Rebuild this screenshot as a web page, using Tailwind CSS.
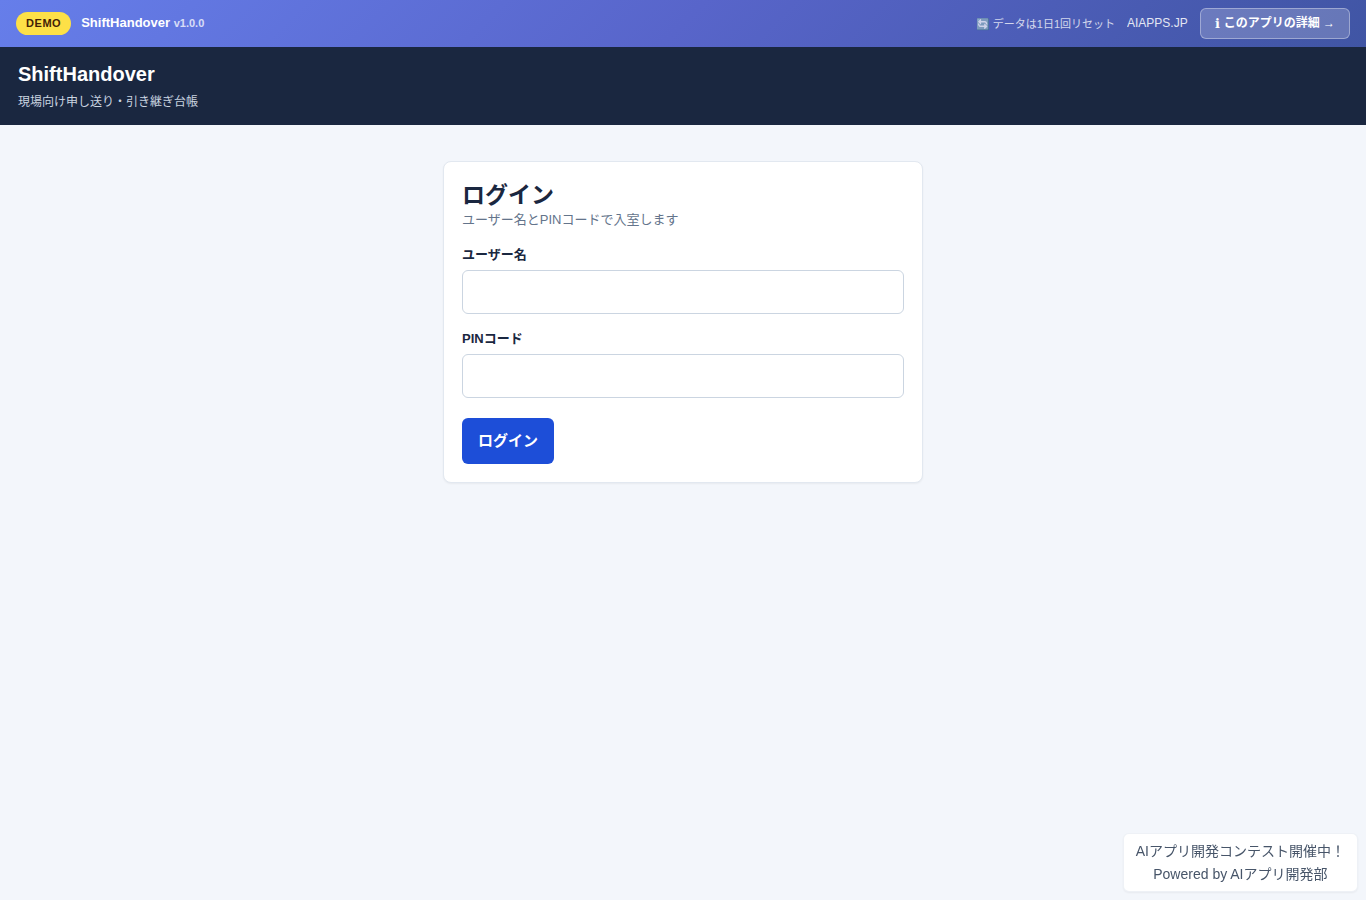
<!DOCTYPE html>
<html lang="ja">
	<head>
		<meta charset="UTF-8" />
		<meta name="viewport" content="width=device-width, initial-scale=1" />
		<title>ShiftHandover</title>
		<script src="https://cdn.jsdelivr.net/npm/@tailwindcss/browser@4"></script>
	</head>
	<body class="min-h-screen bg-[#f3f6fb] text-[#1a2740] font-['Liberation_Sans','Noto_Sans_CJK_JP',sans-serif]">
		<div class="flex items-center justify-between px-4 py-2 text-white bg-linear-135 from-[#667eea] via-[#5865ca] to-[#4055a4]">
			<div class="flex items-center gap-[10px]">
				<span class="rounded-full bg-[#fde047] px-[10px] py-1 text-[11px] leading-[15px] font-bold tracking-wider text-[#422006]">DEMO</span>
				<span class="pb-[2px] text-[13px] leading-5 font-bold">ShiftHandover <span class="text-[11px] opacity-75">v1.0.0</span></span>
			</div>
			<div class="flex items-center gap-3">
				<span class="text-[11px] leading-4 opacity-75">🔄 データは1日1回リセット</span>
				<a href="#" class="pb-px text-xs opacity-85">AIAPPS.JP</a>
				<a href="#" class="flex h-[31px] items-center gap-1 rounded-md border border-white/35 bg-white/20 px-[14px] text-xs leading-[17px] font-bold"><span class="font-['DejaVu_Sans',sans-serif] text-[13px]">ℹ</span><span>このアプリの詳細 →</span></a>
			</div>
		</div>

		<header class="bg-[#1a2740] px-[18px] py-[14px] text-white">
			<h1 class="text-xl leading-[26px] font-bold">ShiftHandover</h1>
			<p class="mt-1 pt-[2px] text-xs leading-[18px] text-[#cbd5e1]">現場向け申し送り・引き継ぎ台帳</p>
		</header>

		<main class="px-4 pt-9">
			<section class="mx-auto max-w-[480px] rounded-lg border border-[#e2e8f0] bg-white p-[18px] shadow-xs">
				<h2 class="text-[23px] leading-[30px] font-bold">ログイン</h2>
				<p class="text-[13px] leading-5 text-[#64748b]">ユーザー名とPINコードで入室します</p>
				<form class="mt-[14px]">
					<label for="username" class="block text-[13px] leading-[22px] font-bold">ユーザー名</label>
					<input id="username" name="username" type="text" class="mt-1 block h-11 w-full rounded-md border border-[#cbd5e1] bg-white px-3" />
					<label for="pin" class="mt-[14px] block text-[13px] leading-[22px] font-bold">PINコード</label>
					<input id="pin" name="pin" type="password" class="mt-1 block h-11 w-full rounded-md border border-[#cbd5e1] bg-white px-3" />
					<button type="submit" class="mt-5 block rounded-md bg-[#1d4ed8] px-4 py-3 text-[15px] leading-[22px] font-bold text-white">ログイン</button>
				</form>
			</section>
		</main>

		<aside class="fixed right-2 bottom-2 rounded-md border border-[#e2e8f0]/60 bg-white px-3 pt-[6px] pb-[5px] text-center text-sm leading-[23px] text-[#475569] shadow-xs">
			<p>AIアプリ開発コンテスト開催中！</p>
			<p>Powered by AIアプリ開発部</p>
		</aside>
	</body>
</html>
